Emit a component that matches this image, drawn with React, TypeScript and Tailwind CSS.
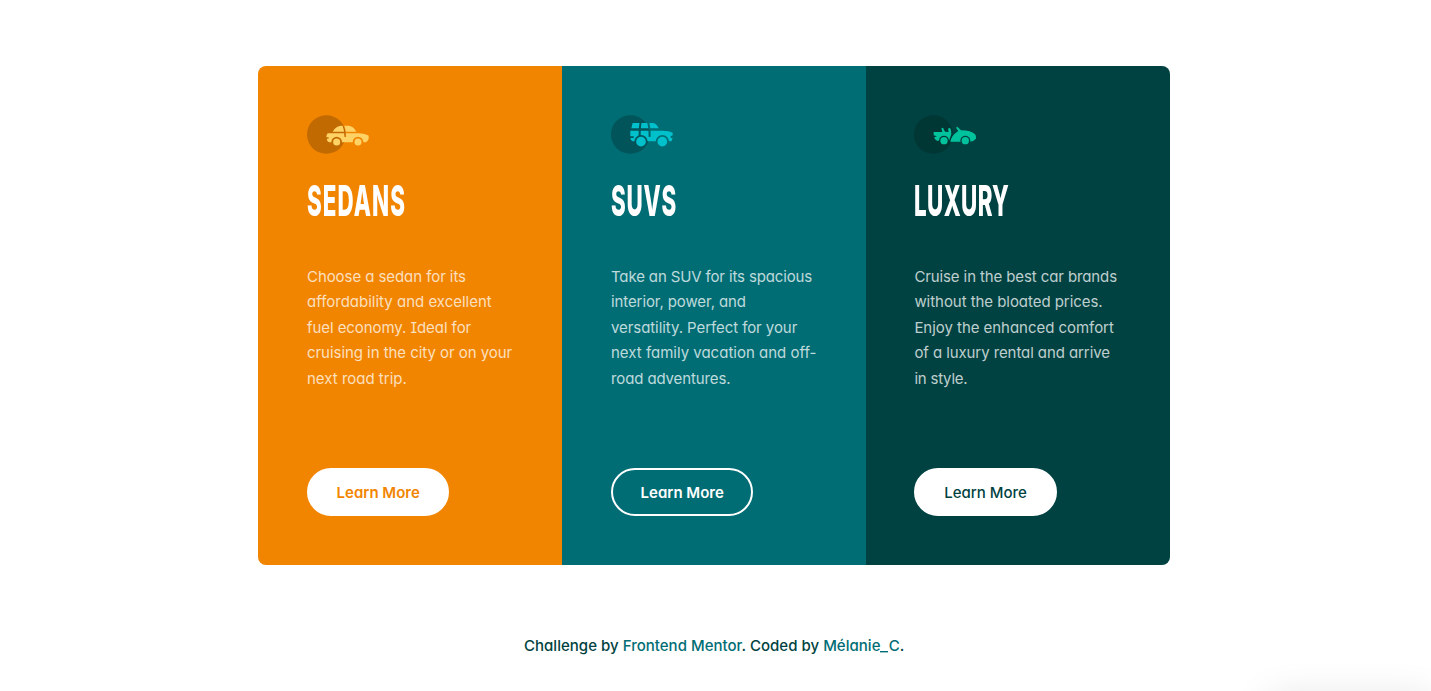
import React from "react";

type Line = { text: string; tracking: string };
type Card = {
  title: string;
  titleClass: string;
  bg: string;
  button: string;
  icon: React.ReactNode;
  lines: Line[];
};

function Sedan() {
  return (
    <svg className="block h-[39px] w-[63px]" viewBox="36 30 189 117">
      <mask id="sedan-cut">
        <rect x="36" y="30" width="200" height="120" fill="#fff" />
        <circle cx="125" cy="111" r="16" fill="#000" />
        <circle cx="189" cy="111" r="16" fill="#000" />
        <path d="M144 58Q151 74 151 96" fill="none" stroke="#000" strokeWidth="5" />
      </mask>
      <circle cx="94" cy="88.500" r="58" fill="#c16a02" />
      <g fill="#ffd265">
        <path mask="url(#sedan-cut)" d="M113 80Q122 63 139 62H160Q175 62 184 80ZM98 85H190Q211 86 221 92V101Q218 112 207 112H103Q94 108 96 101H101V97H94Q94 89 98 85Z" />
        <circle cx="125" cy="111" r="10.500" />
        <circle cx="189" cy="111" r="10.500" />
      </g>
    </svg>
  );
}

function Suv() {
  return (
    <svg className="block h-[39px] w-[63px]" viewBox="33 30 189 117">
      <mask id="suv-cut">
        <rect x="30" y="30" width="200" height="120" fill="#fff" />
        <circle cx="123" cy="110" r="20" fill="#000" />
        <circle cx="187" cy="110" r="20" fill="#000" />
        <path d="M122 50Q118 72 119 94M144 50Q151 72 149 96" fill="none" stroke="#000" strokeWidth="6" />
      </mask>
      <circle cx="91" cy="88.500" r="58" fill="#00545a" />
      <g fill="#00c0cc">
        <path mask="url(#suv-cut)" d="M98 54H157Q169 54 176 70H94ZM91 77H187Q209 77 218 83V91L212 94V99H218L214 109H97Q91 104 91 99H101V94H91Z" />
        <circle cx="123" cy="110" r="14.500" />
        <circle cx="187" cy="110" r="14.500" />
      </g>
    </svg>
  );
}

function Luxury() {
  return (
    <svg className="block h-[39px] w-[63px]" viewBox="33 30 189 117">
      <mask id="luxury-cut">
        <rect x="30" y="30" width="200" height="120" fill="#fff" />
        <circle cx="123" cy="107" r="15" fill="#000" />
        <circle cx="187" cy="107" r="15" fill="#000" />
      </mask>
      <circle cx="91" cy="88.500" r="58" fill="#003735" />
      <g fill="#00c29c">
        <path mask="url(#luxury-cut)" d="M92 81L118 81L115 70L120 68L126 80L137 81L135 71L141 68L144 76L145 88L138 107H102Q94 104 94 97L102 94L92 91ZM142 110Q145 94 158 84L166 78L159 68L163 65L174 76Q204 76 216 88Q221 94 219 101Q212 109 201 110Z" />
        <circle cx="123" cy="107" r="11" />
        <circle cx="187" cy="107" r="11" />
      </g>
    </svg>
  );
}

const cards: Card[] = [
  {
    title: "SEDANS",
    titleClass: "tracking-[2.1px]",
    bg: "bg-[#f28500] pl-[49px]",
    button: "border-white bg-white text-[#f28500] font-semibold",
    icon: <Sedan />,
    lines: [
      { text: "Choose a sedan for its", tracking: "tracking-[-0.07px]" },
      { text: "affordability and excellent", tracking: "tracking-[0px]" },
      { text: "fuel economy. Ideal for", tracking: "tracking-[-0.07px]" },
      { text: "cruising in the city or on your", tracking: "tracking-[-0.05px]" },
      { text: "next road trip.", tracking: "tracking-[0px]" },
    ],
  },
  {
    title: "SUVS",
    titleClass: "tracking-[1.4px]",
    bg: "bg-[#006d74] pl-[49px]",
    button: "border-white text-white font-semibold",
    icon: <Suv />,
    lines: [
      { text: "Take an SUV for its spacious", tracking: "tracking-[-0.14px]" },
      { text: "interior, power, and", tracking: "tracking-[-0.1px]" },
      { text: "versatility. Perfect for your", tracking: "tracking-[-0.07px]" },
      { text: "next family vacation and off-", tracking: "tracking-[0px]" },
      { text: "road adventures.", tracking: "tracking-[-0.12px]" },
    ],
  },
  {
    title: "LUXURY",
    titleClass: "tracking-[0.7px]",
    bg: "bg-[#004241] pl-[48.4px]",
    button: "border-white bg-white text-[#004241] font-medium",
    icon: <Luxury />,
    lines: [
      { text: "Cruise in the best car brands", tracking: "tracking-[-0.11px]" },
      { text: "without the bloated prices.", tracking: "tracking-[-0.05px]" },
      { text: "Enjoy the enhanced comfort", tracking: "tracking-[-0.04px]" },
      { text: "of a luxury rental and arrive", tracking: "tracking-[-0.085px]" },
      { text: "in style.", tracking: "tracking-[-0.22px]" },
    ],
  },
];

export default function App() {
  return (
    <div className="relative flex h-[691px] flex-col overflow-hidden bg-white pt-[66px] font-['Inter',sans-serif] text-[15px] [font-feature-settings:'cv11','cv08']">
      <main className="ml-[258px] grid h-[499px] w-[912px] grid-cols-3 overflow-hidden rounded-lg">
        {cards.map((card) => (
          <section key={card.title} className={`flex flex-col items-start pt-[49px] ${card.bg}`}>
            {card.icon}
            <h2 className={`mt-[21px] h-[50px] origin-left scale-x-[0.52] text-[43px] leading-[50px] font-extrabold whitespace-nowrap text-white ${card.titleClass}`}>
              {card.title}
            </h2>
            <p className="mt-[38.6px] leading-[25.5px] whitespace-nowrap text-white/75">
              {card.lines.map((line) => (
                <span key={line.text} className={`block w-fit ${line.tracking}`}>{line.text}</span>
              ))}
            </p>
            <button className={`mt-[76.9px] h-12 w-[142.4px] rounded-full border-2 pt-[3px] text-[15px] ${card.button}`}>
              Learn More
            </button>
          </section>
        ))}
      </main>
      <footer className="mt-[68px] ml-[524px] leading-[25.5px] font-medium tracking-[0.02px] whitespace-nowrap text-[#004241]">
        Challenge by <a className="text-[#006d74]">Frontend Mentor</a>. Coded by <a className="text-[#006d74]">Mélanie<span className="inline-block origin-left scale-x-[1.15] tracking-[1.2px]">_</span>C</a>.
      </footer>
      <div className="absolute top-[699px] right-0 h-20 w-[162px] shadow-[0_0_40px_rgba(0,0,0,0.12)]" />
    </div>
  );
}
